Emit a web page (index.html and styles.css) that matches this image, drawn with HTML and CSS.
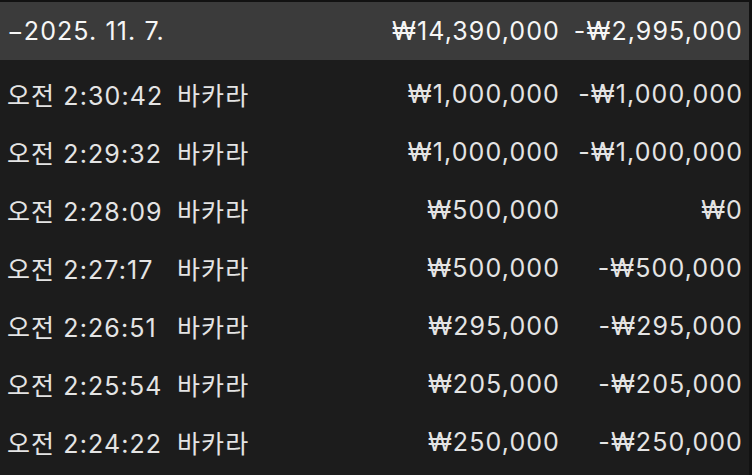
FILE: index.html
```html
<!DOCTYPE html>
<html lang="ko">
<head>
<meta charset="utf-8">
<link rel="stylesheet" href="styles.css">
</head>
<body>
<div class="table">
  <div class="row header">
    <span class="time">−2025. 11. 7.</span>
    <span class="game"></span>
    <span class="amt">₩14,390,000</span>
    <span class="amt">-₩2,995,000</span>
  </div>
  <div class="body">
    <div class="row"><span class="time">오전 2:30:42</span><span class="game">바카라</span><span class="amt">₩1,000,000</span><span class="amt">-₩1,000,000</span></div>
    <div class="row"><span class="time">오전 2:29:32</span><span class="game">바카라</span><span class="amt">₩1,000,000</span><span class="amt">-₩1,000,000</span></div>
    <div class="row"><span class="time">오전 2:28:09</span><span class="game">바카라</span><span class="amt">₩500,000</span><span class="amt">₩0</span></div>
    <div class="row"><span class="time">오전 2:27:17</span><span class="game">바카라</span><span class="amt">₩500,000</span><span class="amt">-₩500,000</span></div>
    <div class="row"><span class="time">오전 2:26:51</span><span class="game">바카라</span><span class="amt">₩295,000</span><span class="amt">-₩295,000</span></div>
    <div class="row"><span class="time">오전 2:25:54</span><span class="game">바카라</span><span class="amt">₩205,000</span><span class="amt">-₩205,000</span></div>
    <div class="row"><span class="time">오전 2:24:22</span><span class="game">바카라</span><span class="amt">₩250,000</span><span class="amt">-₩250,000</span></div>
  </div>
</div>
</body>
</html>
```
FILE: styles.css
```css
html, body {
  margin: 0;
  padding: 0;
  background: #1c1c1c;
}
body {
  width: 752px;
  height: 475px;
  overflow: hidden;
  font-family: "Inter", "Noto Sans CJK KR", sans-serif;
  font-size: 25px;
  letter-spacing: 1.1px;
  color: #e4e4e4;
}
.table {
  height: 473px;
  border-top: 2px solid #121212;
  border-right: 3px solid #121212;
  background: #1c1c1c;
}
.row {
  display: grid;
  grid-template-columns: 170px 1fr 200px 183px;
  align-items: center;
  height: 58px;
  padding: 0 7px;
  white-space: nowrap;
}
.row .amt {
  text-align: right;
  margin-right: -1px;
}
.header {
  background: #3b3b3b;
  color: #f6f6f6;
}
.body {
  padding-top: 5px;
}
```
